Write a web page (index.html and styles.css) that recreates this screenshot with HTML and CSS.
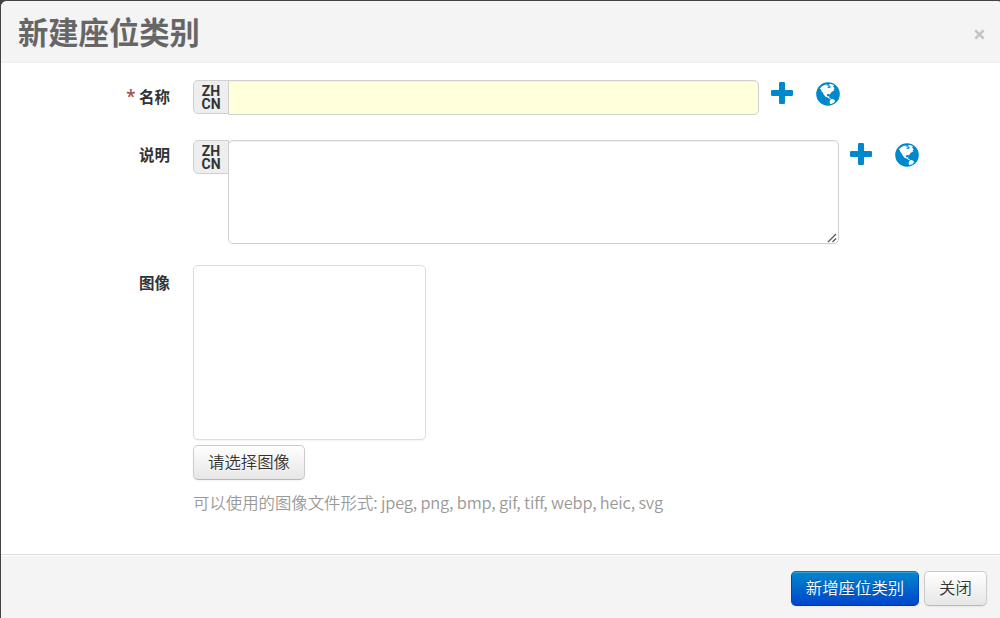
FILE: index.html
```html
<!DOCTYPE html>
<html lang="zh-CN">
<head>
<meta charset="utf-8">
<title>新建座位类别</title>
<link rel="stylesheet" href="styles.css">
</head>
<body>
<svg width="0" height="0" class="defs">
  <symbol id="plus" viewBox="0 0 22 22"><path d="M9.3 0h3.4Q14 0 14 1.3V8h6.7Q22 8 22 9.3v3.4Q22 14 20.7 14H14v6.7Q14 22 12.700 22H9.300Q8 22 8 20.700V14H1.300Q0 14 0 12.700V9.300Q0 8 1.300 8H8V1.300Q8 0 9.300 0z"/></symbol>
  <symbol id="globe" viewBox="0 0 24 24"><circle cx="12" cy="12" r="11.8"/><path class="land" d="M3.800 6.500L6 4.200 9 2.700 11.500 2.400 10.700 3.800 12.300 3.600 13 4.600 11 5 12.500 6.100 14.300 5.700 14.500 3.900 12.500 2.900 14 1.900 16 2.200 18 3.500 17 4.500 18.700 6.300 17.500 7.400 18.500 8.200 15.800 9.700 14.600 11.300 13.900 12.800 13.300 11.900 11.500 12 10.700 13.400 12 14.500 13.200 14 13 15.500 14.400 16 14.900 17.100 13.400 16.800 11.700 15.600 9.500 14.700 7.700 12.500 6.800 10.600 5.500 9.200 5 7.500zM14.800 17.300L16.800 17 18.800 18.300 19 19.300 17.600 21 14.200 22.300 13.600 20.300 14 18.500z"/></symbol>
</svg>
<div class="modal">
  <header class="modal-header"><h3>新建座位类别</h3><button class="close" aria-label="关闭"><svg viewBox="0 0 10 10"><path d="M1.200 1.200l7.600 7.600M8.800 1.200l-7.600 7.600"/></svg></button></header>
  <main class="modal-body">
    <div class="row name-row">
      <label class="label"><span class="required">*</span> 名称</label>
      <span class="lang"><span>ZH</span><span>CN</span></span><input class="name" type="text">
      <a class="add"><svg><use href="#plus"/></svg></a><a class="world"><svg><use href="#globe"/></svg></a>
    </div>
    <div class="row desc-row">
      <label class="label">说明</label>
      <span class="lang"><span>ZH</span><span>CN</span></span><div class="desc"><svg class="grip" viewBox="0 0 10 10"><path d="M1 9l8-8M5.500 9L9 5.500"/></svg></div>
      <a class="add"><svg><use href="#plus"/></svg></a><a class="world"><svg><use href="#globe"/></svg></a>
    </div>
    <div class="row">
      <label class="label image-label">图像</label>
      <div class="image-field">
        <div class="preview"></div>
        <button class="btn choose">请选择图像</button>
        <p class="help">可以使用的图像文件形式<span class="formats">: jpeg, png, bmp, gif, tiff, webp, heic, svg</span></p>
      </div>
    </div>
  </main>
  <footer class="modal-footer"><button class="btn primary">新增座位类别</button><button class="btn cancel">关闭</button></footer>
</div>
</body>
</html>
```
FILE: styles.css
```css
* { box-sizing: border-box; }
body { margin: 0; height: 618px; padding: 1px 0 0 1px; overflow: hidden; background: #464347; color: #333; font: 16.4px "Noto Sans CJK SC", sans-serif; }
.defs { position: absolute; }
.modal { height: 617px; display: flex; flex-direction: column; background: #fff; border-radius: 6px 2px 0 0; overflow: hidden; }
.modal-header { height: 62px; flex: none; display: flex; justify-content: space-between; background: #f4f4f4; border-bottom: 1px solid #eee; padding: 0 15px 0 17px; }
h3 { margin: 0; font-size: 30.300px; line-height: 60px; font-weight: 700; color: #666; }
.close { border: 0; background: none; padding: 0; margin-top: 28px; width: 11px; height: 11px; }
.close svg { display: block; width: 11px; height: 11px; fill: none; stroke: #c4c4c4; stroke-width: 2.300; }
.modal-body { height: 491px; flex: none; padding: 17px 0 0; }
.row { display: flex; align-items: flex-start; }
.name-row { height: 60px; }
.desc-row { height: 125px; }
.label { width: 169px; margin-right: 23px; text-align: right; font-size: 15.500px; line-height: 24px; font-weight: 700; padding-top: 4px; flex: none; }
.desc-row .label { padding-top: 2px; }
.required { color: #b05350; font: 600 17px/20px "Noto Sans", sans-serif; }
.lang { display: flex; flex-direction: column; width: 36px; height: 34px; flex: none; border: 1px solid #d0d0d0; border-radius: 5px 0 0 5px; background: #eee; padding-top: 4px; text-align: center; font: 700 14px/13px Roboto, sans-serif; }
.name { width: 531px; height: 35px; margin: 0 0 0 -1px; border: 1px solid #d0d0d0; border-radius: 0 5px 5px 0; background: #ffffdc; box-shadow: inset 0 1px 1px rgba(0,0,0,.05); }
.desc { width: 611px; height: 104px; margin-left: -1px; display: flex; align-items: flex-end; justify-content: flex-end; border: 1px solid #d0d0d0; border-radius: 5px; background: #fff; box-shadow: inset 0 1px 1px rgba(0,0,0,.05); }
.grip { width: 10px; height: 10px; margin: 0 1px 0 0; fill: none; stroke: #555; stroke-width: 1.200; }
.add, .world { fill: #0088cc; }
.add { margin: 3px 0 0 11px; }
.name-row .add { margin: 2px 0 0 12px; }
.name-row .world { margin-top: 2px; }
.world { margin: 2.500px 0 0 23px; }
.add svg { display: block; width: 22px; height: 22px; }
.world svg { display: block; width: 24px; height: 24px; }
.land { fill: #fff; }
.image-field { display: flex; flex-direction: column; align-items: flex-start; }
.label.image-label { padding-top: 5px; }
.preview { width: 233px; height: 175px; border: 1px solid #ddd; border-radius: 5px; box-shadow: 0 1px 2px rgba(0,0,0,.05); margin-bottom: 5px; }
.btn { height: 35px; padding: 0 0 2px; border: 1px solid #ccc; border-bottom-color: #b8b8b8; border-radius: 5px; background: linear-gradient(#fff, #e6e6e6); color: #333; font: 350 16.400px/31px "Noto Sans CJK SC", sans-serif; text-shadow: 0 1px 1px rgba(255,255,255,.75); box-shadow: inset 0 1px 0 rgba(255,255,255,.2), 0 1px 2px rgba(0,0,0,.05); }
.choose { width: 112px; }
.help { margin: 10px 0 0; color: #999; font: 350 16.400px/24px "Noto Sans CJK SC", sans-serif; white-space: nowrap; }
.formats { letter-spacing: -.180px; }
.modal-footer { flex: 1; display: flex; justify-content: flex-end; gap: 5px; padding: 16px 13px 0; background: #f4f4f4; border-top: 1px solid #ddd; box-shadow: inset 0 1px 0 #fff; }
.primary { width: 128px; color: #fff; background: linear-gradient(#0088cc, #0044cc); border-color: #0077c4 #0044b8 #003ba8; text-shadow: 0 -1px 0 rgba(0,0,0,.25); }
.cancel { width: 63px; }
```
